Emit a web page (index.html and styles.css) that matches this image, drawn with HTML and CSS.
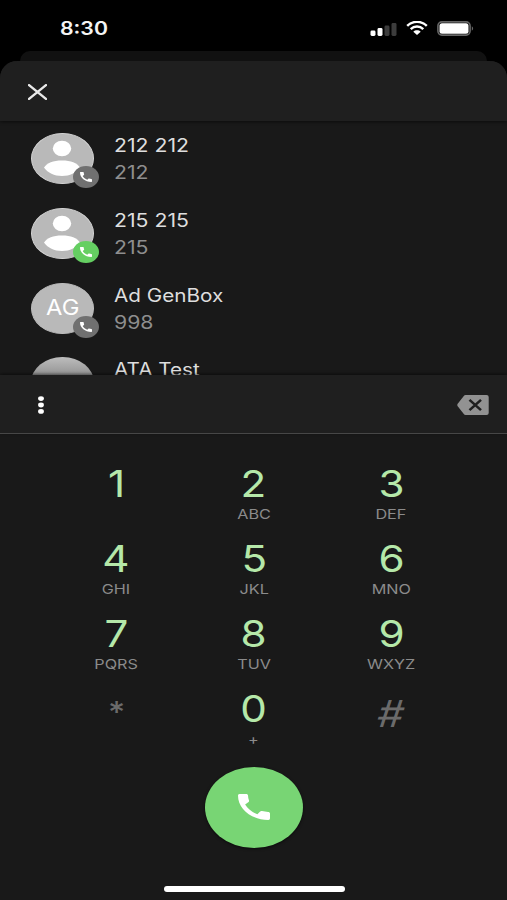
FILE: index.html
```html
<!DOCTYPE html>
<html lang="en">
<head>
<meta charset="utf-8">
<title>Dialer</title>
<link rel="stylesheet" href="styles.css">
</head>
<body>
<svg class="defs" aria-hidden="true">
  <symbol id="phone" viewBox="3 3 18 18" preserveAspectRatio="none">
    <path d="M20.01 15.38c-1.23 0-2.42-.2-3.53-.56a.98.98 0 0 0-1.01.24l-1.57 1.97c-2.83-1.35-5.48-3.9-6.89-6.83l1.95-1.66c.27-.28.35-.67.24-1.02-.37-1.11-.56-2.3-.56-3.53 0-.54-.45-.99-.99-.99H4.19C3.65 3 3 3.24 3 3.99 3 13.28 10.73 21 20.01 21c.71 0 .99-.63.99-1.18v-3.45c0-.54-.45-.99-.99-.99z"/>
  </symbol>
  <symbol id="person" viewBox="0 0 62 51" preserveAspectRatio="none">
    <ellipse cx="31" cy="15.5" rx="9.2" ry="7.7"/>
    <path d="M13 34.500C16 30 22 27.500 31 27.500S46 30 49 34.500C45 40 39 43 31 43S17 40 13 34.500z"/>
  </symbol>
</svg>
<div class="phone">
  <header class="status">
    <span class="time"><b>8:30</b></span>
    <span class="indicators">
      <svg class="signal" viewBox="0 0 27 14"><rect x="0.5" y="8.500" width="5" height="5.500" rx="1.4"/><rect x="7.5" y="6" width="5" height="8" rx="1.4"/><rect class="off" x="14.5" y="3.5" width="5" height="10.5" rx="1.4"/><rect class="off" x="21.5" y="1" width="5" height="13" rx="1.4"/></svg>
      <svg class="wifi" viewBox="0 0 22 14"><path d="M1.2 4.9C6.700-.5 15.300-.5 20.800 4.900M4.700 8.100C8.300 4.600 13.700 4.600 17.300 8.100"/><path class="dot" d="M7.300 10.700C9.400 8.800 12.600 8.800 14.700 10.700L11 14z"/></svg>
      <svg class="battery" viewBox="0 0 37 15"><rect class="shell" x="0.9" y="0.9" width="32.200" height="13.200" rx="4"/><rect x="2.500" y="2.200" width="29" height="10.600" rx="2.500"/><path class="cap" d="M34.800 5.300C36.600 6 36.600 9 34.800 9.700z"/></svg>
    </span>
  </header>
  <div class="backsheet"></div>
  <main class="sheet">
    <div class="topbar">
      <svg class="close" viewBox="0 0 18 15"><path d="M1 1L17 14M17 1L1 14"/></svg>
    </div>
    <section class="list">
      <article class="row">
        <div class="avatar"><svg class="person"><use href="#person"/></svg><i class="badge"><svg><use href="#phone"/></svg></i></div>
        <div class="info"><span class="name numeric">212 212</span><span class="number">212</span></div>
      </article>
      <article class="row">
        <div class="avatar"><svg class="person"><use href="#person"/></svg><i class="badge online"><svg><use href="#phone"/></svg></i></div>
        <div class="info"><span class="name numeric">215 215</span><span class="number">215</span></div>
      </article>
      <article class="row">
        <div class="avatar plain"><span class="initials">AG</span><i class="badge"><svg><use href="#phone"/></svg></i></div>
        <div class="info"><span class="name">Ad GenBox</span><span class="number">998</span></div>
      </article>
      <article class="row">
        <div class="avatar plain shaded"></div>
        <div class="info"><span class="name">ATA Test</span></div>
      </article>
    </section>
    <div class="entry">
      <svg class="more" viewBox="0 0 6 18"><ellipse cx="3" cy="2.600" rx="2.900" ry="2.400"/><ellipse cx="3" cy="9" rx="2.900" ry="2.400"/><ellipse cx="3" cy="15.400" rx="2.900" ry="2.400"/></svg>
      <svg class="erase" viewBox="0 0 32 20"><path d="M8.500 0H29.500Q31.700 0 31.700 2V18Q31.700 20 29.500 20H8.500Q7.500 20 6.800 19L.5 11Q0 10 .5 9L6.800 1Q7.500 0 8.500 0z"/><path class="x" d="M12.500 4.900L24 15.100M24 4.900L12.500 15.100"/></svg>
    </div>
    <section class="keys">
      <div class="key"><span class="digit">1</span></div>
      <div class="key"><span class="digit">2</span><span class="letters">ABC</span></div>
      <div class="key"><span class="digit">3</span><span class="letters">DEF</span></div>
      <div class="key"><span class="digit">4</span><span class="letters">GHI</span></div>
      <div class="key"><span class="digit">5</span><span class="letters">JKL</span></div>
      <div class="key"><span class="digit">6</span><span class="letters">MNO</span></div>
      <div class="key"><span class="digit">7</span><span class="letters">PQRS</span></div>
      <div class="key"><span class="digit">8</span><span class="letters">TUV</span></div>
      <div class="key"><span class="digit">9</span><span class="letters">WXYZ</span></div>
      <div class="key"><span class="digit star">*</span></div>
      <div class="key"><span class="digit">0</span><span class="letters">+</span></div>
      <div class="key"><span class="digit hash">#</span></div>
    </section>
    <div class="call"><svg><use href="#phone"/></svg></div>
    <div class="home"></div>
  </main>
</div>
</body>
</html>
```
FILE: styles.css
```css
* { box-sizing: border-box; }
body { margin: 0; background: #000; font-family: Inter, "Liberation Sans", sans-serif; }
svg { display: block; }
.defs { position: absolute; width: 0; height: 0; }
.phone { width: 507px; height: 900px; overflow: hidden; display: flex; flex-direction: column; background: #000; }

.status { height: 51px; padding: 6px 33px 0 59.5px; display: flex; justify-content: space-between; align-items: center; }
.time { color: #f4f4f4; font-size: 18px; line-height: 22px; }
.time b { display: inline-block; font-weight: 600; transform: scaleX(1.18); transform-origin: left; }
.indicators { display: flex; align-items: center; fill: #fff; }
.signal { width: 27px; height: 14px; margin-right: 9px; }
.signal .off { fill: #3c3c3c; }
.wifi { width: 22px; height: 14px; margin-right: 9px; margin-top: -1px; fill: none; stroke: #fff; stroke-width: 2.4; }
.wifi .dot { fill: #fff; stroke: none; }
.battery { width: 37px; height: 15px; }
.battery .shell { fill: none; stroke: #666; stroke-width: 1.6; }
.battery .cap { fill: #666; }

.backsheet { height: 10px; margin: 0 20px; background: #111; border-radius: 12px 12px 0 0; flex: none; }
.sheet { flex: 1; display: flex; flex-direction: column; background: #191919; border-radius: 17px 17px 0 0; overflow: hidden; }
.topbar { height: 60px; flex: none; padding: 1px 28px 0; display: flex; align-items: center; background: #1f1f1f; box-shadow: 0 1px 3px #0008; }
.close { width: 19px; height: 16px; fill: none; stroke: #e8e8e8; stroke-width: 2.3; stroke-linecap: round; }

.list { height: 254px; flex: none; overflow: hidden; padding-top: 12.4px; }
.row { height: 74.6px; padding-left: 31px; display: flex; gap: 20px; }
.avatar { position: relative; width: 62.5px; height: 51px; border-radius: 50%; background: #b9b9b9; border: 1px solid #d2d2d2; display: flex; align-items: center; justify-content: center; }
.avatar.plain { border-color: #bcbcbc; }
.avatar.shaded { background: linear-gradient(#bdbdbd, #8e8e8e 40%); border: 0; }
.person { width: 62px; height: 51px; flex: none; fill: #fff; }
.initials { color: #fff; font-size: 21px; line-height: 26px; transform: scaleX(1.13); }
.badge { position: absolute; left: 40.5px; top: 32px; width: 26px; height: 22px; border-radius: 50%; background: #707070; display: flex; align-items: center; justify-content: center; }
.badge.online { background: #65cf62; }
.badge svg { width: 12px; height: 10px; fill: #fff; }
.info { display: flex; flex-direction: column; align-items: flex-start; }
.name, .number { font-size: 18px; transform-origin: left; transform: scaleX(1.15); white-space: nowrap; }
.name { color: #dedede; line-height: 25px; }
.name.numeric, .number { transform: scaleX(1.18); }
.number { color: #8e8e8e; line-height: 30px; }

.entry { height: 59px; flex: none; padding: 1px 18px 0 38px; display: flex; align-items: center; justify-content: space-between; background: #1f1f1f; border-bottom: 1px solid #474747; box-shadow: 0 -1px 3px #0008; position: relative; }
.more { width: 6px; height: 18px; fill: #fff; }
.erase { width: 32px; height: 20px; fill: #929292; }
.erase .x { stroke: #1f1f1f; stroke-width: 2.6; }

.keys { height: 301px; flex: none; margin: 29px 47.5px 0; display: grid; grid-template-columns: repeat(3, 137.5px); grid-auto-rows: 75.1px; }
.key { display: flex; flex-direction: column; align-items: center; }
.digit { color: #b5e8a9; font-size: 37px; line-height: 41px; transform: scaleX(1.14); }
.letters { color: #8b8b8b; font-size: 13.5px; line-height: 20px; transform: scaleX(1.2); }
.star, .hash { color: #6b6b6b; }
.star { font-size: 29px; padding-top: 3px; font-weight: 500; }
.hash { padding-top: 5px; transform: scaleX(1.14) skewX(-7deg); }

.call { width: 98px; height: 81px; flex: none; margin: 2.5px 0 0 205px; border-radius: 50%; background: #78d574; display: flex; align-items: center; justify-content: center; box-shadow: 0 1px 3px #0009; }
.call svg { width: 32px; height: 26px; fill: #fff; }
.home { width: 181px; height: 6px; flex: none; margin: 38.5px 0 0 164px; border-radius: 3px; background: #fff; }
```
